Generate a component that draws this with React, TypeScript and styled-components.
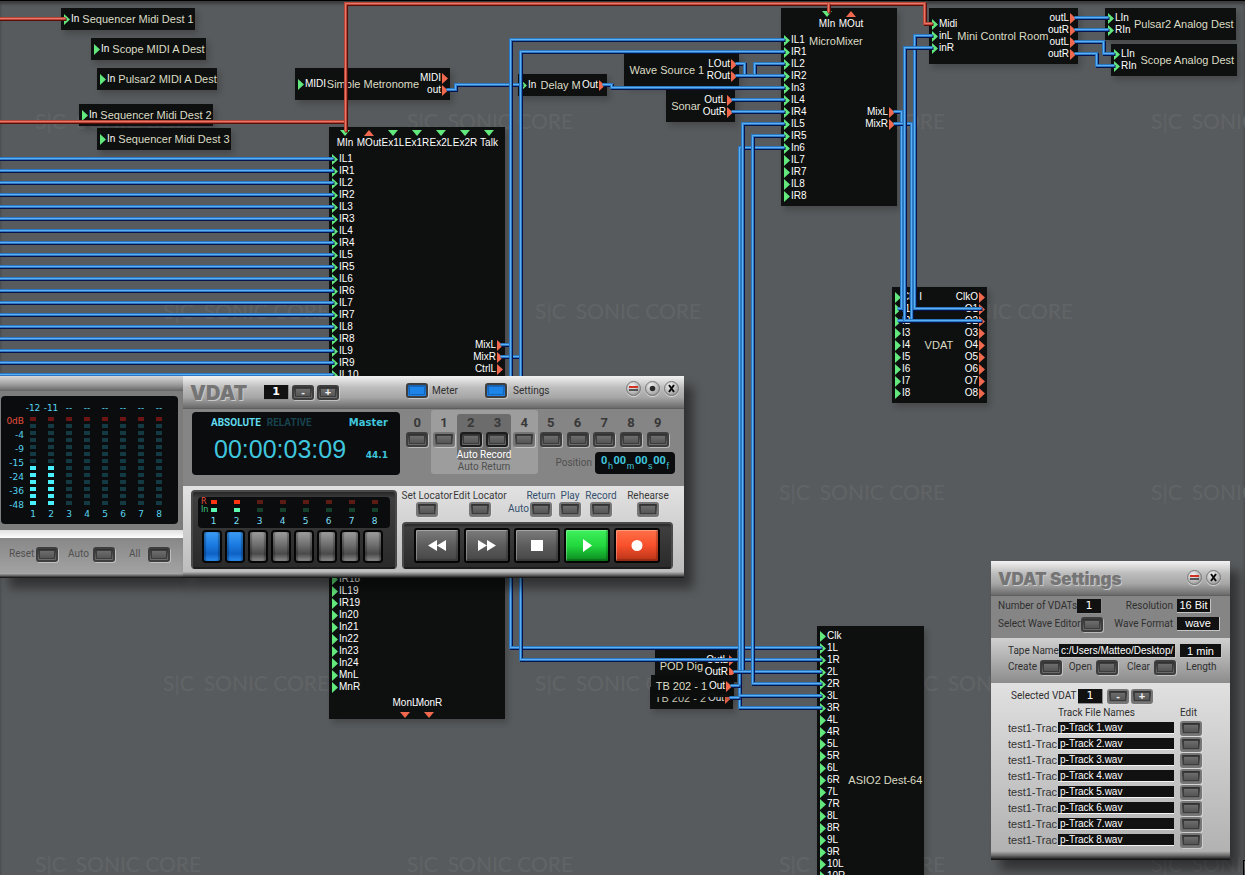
import React from "react";
import styled, { createGlobalStyle, css } from "styled-components";

const SANS = '"Liberation Sans", Arial, sans-serif';
const LABEL = 'Roboto, "Liberation Sans", sans-serif';
const PIXEL = '"DejaVu Sans", Verdana, sans-serif';
const CYAN = "#3fc6de";

const GlobalStyle = createGlobalStyle`
  * { box-sizing: border-box; }
  body { margin: 0; background: #585b5d; font-family: ${SANS}; }
  button, input, select, output { font: inherit; color: inherit; margin: 0; padding: 0; border: 0; }
`;

/* ---------- routing canvas ---------- */

const Canvas = styled.main`
  position: relative;
  height: 100vh;
  overflow: hidden;
  background: #585b5d;
  border-top: 1px solid #000;
  box-shadow: inset 0 3px 3px rgba(0, 0, 0, 0.35);
`;

const Surface = styled.div`
  position: absolute;
  inset: -1px 0 0 0;
`;

const Watermark = styled.span<{ $x: number; $y: number }>`
  position: absolute;
  left: ${(p) => p.$x}px;
  top: ${(p) => p.$y}px;
  display: flex;
  gap: 10px;
  font: 400 21px/24px Lato, ${SANS};
  color: #616466;
  white-space: nowrap;
`;

const NodeBox = styled.section<{ $x: number; $y: number; $w: number; $h: number }>`
  position: absolute;
  left: ${(p) => p.$x}px;
  top: ${(p) => p.$y}px;
  width: ${(p) => p.$w}px;
  height: ${(p) => p.$h}px;
  display: flex;
  flex-direction: column;
  background: rgba(11, 13, 13, 0.97);
  box-shadow: 3px 4px 6px rgba(0, 0, 0, 0.2);
  color: #fff;
  font-size: 10px;
  line-height: 12px;
  white-space: nowrap;
`;

const NodeBody = styled.div<{ $start?: boolean }>`
  flex: 1;
  display: flex;
  align-items: ${(p) => (p.$start ? "flex-start" : "center")};
  padding: 0 2px 0 3px;
`;

const NodeTitle = styled.h2<{ $clip?: boolean; $spaced?: boolean }>`
  flex: 1;
  min-width: 0;
  margin: 0;
  padding-left: ${(p) => (p.$spaced ? 3 : 0)}px;
  overflow: ${(p) => (p.$clip ? "hidden" : "visible")};
  font-size: 11px;
  font-weight: 400;
  line-height: 14px;
  text-align: center;
  color: #dcdcc4;
`;

const PortList = styled.ul<{ $right?: boolean; $top?: number }>`
  list-style: none;
  margin: ${(p) => p.$top ?? 0}px 0 0;
  padding: 0;
  display: flex;
  flex-direction: column;
  align-items: ${(p) => (p.$right ? "flex-end" : "flex-start")};
`;

const PortItem = styled.li`
  display: flex;
  align-items: center;
  gap: 1px;
  height: 12px;
`;

const EdgePorts = styled.ul<{ $bottom?: boolean }>`
  list-style: none;
  margin: 0;
  padding: ${(p) => (p.$bottom ? "4px 0 1px" : "3px 0 4px")};
  display: flex;
  justify-content: center;
`;

const EdgePort = styled.li<{ $bottom?: boolean }>`
  width: 24px;
  display: flex;
  flex-direction: ${(p) => (p.$bottom ? "column-reverse" : "column")};
  align-items: center;
  gap: ${(p) => (p.$bottom ? 3 : 1)}px;
`;

const GREEN = "#62e87c";
const RED = "#f0684e";

const SideArrow = ({ out }: { out?: boolean }) => (
  <svg width="6" height="11" viewBox="0 0 6 11" aria-hidden="true">
    <path d="M0 0L6 5.5L0 11Z" fill={out ? RED : GREEN} />
  </svg>
);

const EdgeArrow = ({ up, out }: { up?: boolean; out?: boolean }) => (
  <svg width="10" height="6" viewBox="0 0 10 6" aria-hidden="true">
    <path d={up ? "M0 6L5 0L10 6Z" : "M0 0L5 6L10 0Z"} fill={out ? RED : GREEN} />
  </svg>
);

type NodeSpec = {
  title?: string;
  x: number;
  y: number;
  w: number;
  h: number;
  ins?: string[];
  outs?: string[];
  top?: string[];
  bottom?: string[];
  outsTop?: number;
  clip?: boolean;
};

const pairs = (from: number, to: number, make: (n: number) => string[]) =>
  Array.from({ length: to - from + 1 }, (_, i) => make(from + i)).flat();

const NODES: NodeSpec[] = [
  { title: "Sequencer Midi Dest 1", x: 61, y: 8, w: 134, h: 22, ins: ["In"] },
  { title: "Scope MIDI A Dest", x: 91, y: 38, w: 115, h: 22, ins: ["In"] },
  { title: "Pulsar2 MIDI A Dest", x: 97, y: 68, w: 120, h: 22, ins: ["In"] },
  { title: "Sequencer Midi Dest 2", x: 79, y: 104, w: 134, h: 22, ins: ["In"] },
  { title: "Sequencer Midi Dest 3", x: 97, y: 128, w: 134, h: 22, ins: ["In"] },
  { title: "Simple Metronome", x: 295, y: 68, w: 155, h: 32, ins: ["MIDI"], outs: ["MIDI", "out"] },
  {
    x: 329, y: 127, w: 176, h: 592, outsTop: 186,
    top: ["MIn", "MOut", "Ex1L", "Ex1R", "Ex2L", "Ex2R", "Talk"],
    bottom: ["MonL", "MonR"],
    ins: [...pairs(1, 19, (n) => [`IL${n}`, `IR${n}`]), ...pairs(20, 24, (n) => [`In${n}`]), "MnL", "MnR"],
    outs: ["MixL", "MixR", "CtrlL"],
  },
  { title: "Delay M", x: 518, y: 74, w: 89, h: 22, ins: ["In"], outs: ["Out"], clip: true },
  { title: "Wave Source 1", x: 624, y: 54, w: 115, h: 32, outs: ["LOut", "ROut"] },
  { title: "Sonar", x: 666, y: 90, w: 69, h: 32, outs: ["OutL", "OutR"] },
  {
    title: "MicroMixer", x: 781, y: 8, w: 116, h: 198, outsTop: 72,
    top: ["MIn", "MOut"],
    ins: ["IL1", "IR1", "IL2", "IR2", "In3", "IL4", "IR4", "IL5", "IR5", "In6", "IL7", "IR7", "IL8", "IR8"],
    outs: ["MixL", "MixR"],
  },
  { title: "Mini Control Room", x: 929, y: 8, w: 149, h: 56, ins: ["Midi", "inL", "inR"], outs: ["outL", "outR", "outL", "outR"] },
  { title: "Pulsar2 Analog Dest", x: 1105, y: 8, w: 131, h: 32, ins: ["LIn", "RIn"] },
  { title: "Scope Analog Dest", x: 1111, y: 44, w: 126, h: 32, ins: ["LIn", "RIn"] },
  {
    title: "VDAT", x: 892, y: 287, w: 95, h: 116,
    ins: ["Clk I", ...pairs(1, 8, (n) => [`I${n}`])],
    outs: ["ClkO", ...pairs(1, 8, (n) => [`O${n}`])],
  },
  { title: "POD Dig", x: 655, y: 650, w: 82, h: 32, outs: ["OutL", "OutR"] },
  { title: "TB 202 - 2", x: 650, y: 687, w: 83, h: 22, outs: ["Out"] },
  { title: "TB 202 - 1", x: 651, y: 675, w: 83, h: 22, outs: ["Out"] },
  {
    title: "ASIO2 Dest-64", x: 817, y: 626, w: 107, h: 308,
    ins: ["Clk", ...pairs(1, 12, (n) => [`${n}L`, `${n}R`])],
  },
];

const PatchNode = ({ n }: { n: NodeSpec }) => (
  <NodeBox $x={n.x} $y={n.y} $w={n.w} $h={n.h}>
    {n.top && (
      <EdgePorts>
        {n.top.map((t) => (
          <EdgePort key={t}>
            <EdgeArrow up={t === "MOut"} out={t === "MOut"} />
            {t}
          </EdgePort>
        ))}
      </EdgePorts>
    )}
    <NodeBody $start={n.outsTop !== undefined}>
      {n.ins && (
        <PortList>
          {n.ins.map((t, i) => (
            <PortItem key={i}>
              <SideArrow />
              {t}
            </PortItem>
          ))}
        </PortList>
      )}
      <NodeTitle $clip={n.clip} $spaced={!!n.ins && (!n.outs || n.clip)}>{n.title}</NodeTitle>
      {n.outs && (
        <PortList $right $top={n.outsTop}>
          {n.outs.map((t, i) => (
            <PortItem key={i}>
              {t}
              <SideArrow out />
            </PortItem>
          ))}
        </PortList>
      )}
    </NodeBody>
    {n.bottom && (
      <EdgePorts $bottom>
        {n.bottom.map((t) => (
          <EdgePort key={t} $bottom>
            <EdgeArrow out />
            {t}
          </EdgePort>
        ))}
      </EdgePorts>
    )}
  </NodeBox>
);

const WireLayer = styled.svg`
  position: absolute;
  inset: 0;
  width: 100%;
  height: 100%;
  fill: none;
`;

const AUDIO_WIRES = [
  ...Array.from({ length: 19 }, (_, k) => `M-4 ${158 + 12 * k}H333`),
  "M446 89H455V84H522",
  "M602 84H611V87H784",
  "M500 344H510",
  "M500 356H520",
  "M784 39H510V647H821",
  "M784 51H520V659H821",
  "M735 63H744V75",
  "M784 63H754V75",
  "M735 75H784",
  "M731 99H784",
  "M731 111H784",
  "M784 147H739V707H821",
  "M729 697H739",
  "M730 685H739",
  "M739 695H821",
  "M784 123H742V671",
  "M733 671H821",
  "M784 135H752V683H821",
  "M893 111H901V308H897",
  "M893 123H911V320H897",
  "M981 308H914V35H932",
  "M981 320H904V47H932",
  "M1074 17H1108",
  "M1074 29H1108",
  "M1074 41H1103V53H1114",
  "M1074 53H1096V65H1114",
];

const MIDI_WIRES = ["M-4 18H65", "M-4 121H345", "M345 131V3H924V23H932", "M828 3V12"];

const Wire = ({ d, midi }: { d: string; midi?: boolean }) => (
  <g transform="translate(0.5 0.5)">
    <path d={d} transform="translate(1 1)" stroke={midi ? "#5a0d0a" : "#06134f"} strokeWidth="3" />
    <path d={d} stroke={midi ? "#b84436" : "#2a78c2"} strokeWidth="3" />
    <path d={d} stroke={midi ? "#e87868" : "#5eb0f4"} strokeWidth="1" />
  </g>
);

/* ---------- shared device parts ---------- */

const Device = styled.section<{ $x: number; $y: number; $w: number }>`
  position: absolute;
  left: ${(p) => p.$x}px;
  top: ${(p) => p.$y}px;
  width: ${(p) => p.$w}px;
  display: flex;
  flex-direction: column;
  background: #858585;
  box-shadow: 9px 10px 10px rgba(0, 0, 0, 0.45);
  font: 10px/14px ${LABEL};
  color: #303030;
  white-space: nowrap;
`;

const DeviceHeader = styled.header<{ $h: number; $end: number }>`
  height: ${(p) => p.$h}px;
  display: flex;
  align-items: center;
  padding: 0 ${(p) => p.$end}px 0 7px;
  background: linear-gradient(#f2f2f2 0, #bdbdbd 35%, #a6a6a6 65%, #6c6c6c 96%, #575757 100%);
`;

const DeviceTitle = styled.h1<{ $size: number }>`
  margin: 0;
  font: 900 ${(p) => p.$size}px/24px Inter, ${SANS};
  color: #757575;
  text-shadow: 1px 1px 0 #c9c9c9;
`;

const BottomEdge = styled.div<{ $h: number }>`
  height: ${(p) => p.$h}px;
  background: linear-gradient(#b4b4b4, #6a6a6a 50%, #141414 95%);
`;

const KeyButton = styled.button<{ $tone?: "dark" | "black" | "light"; $lit?: boolean }>`
  flex: none;
  display: flex;
  width: 22px;
  height: 15px;
  padding: 1px;
  border-radius: 3px;
  border: 2px solid ${(p) => (p.$tone === "black" ? "#1d1d1d" : p.$tone === "light" ? "#767676" : "#3e3e3e")};
  background: ${(p) => (p.$lit ? "linear-gradient(#1b5fae, #1e86ee)" : "linear-gradient(#2e2e2e, #6e6e6e)")};
  box-shadow: 1px 1px 0 rgba(225, 225, 225, 0.55);
  &::before {
    content: attr(data-sign);
    flex: 1;
    align-self: stretch;
    border: 1px solid ${(p) => (p.$lit ? "#1767b8" : "#3c3c3c")};
    background: ${(p) => (p.$lit ? "#1d84ea" : "linear-gradient(#6d6d6d, #555)")};
    font: 700 11px/7px ${SANS};
    text-align: center;
    color: #f0f0f0;
  }
`;

const Readout = styled.output<{ $w: number; $bold?: boolean }>`
  flex: none;
  width: ${(p) => p.$w}px;
  height: 15px;
  background: #111;
  border: solid #8d8d8d;
  border-width: 0 1px 1px 0;
  color: #fff;
  font: ${(p) => (p.$bold ? 700 : 400)} 11px/14px ${PIXEL};
  text-align: center;
`;

const Cap = styled.button`
  flex: none;
  width: 15px;
  height: 15px;
  display: grid;
  place-items: center;
  border-radius: 50%;
  border: 1px solid #777;
  background: radial-gradient(circle at 40% 30%, #f4f4f4, #b4b4b4 60%, #777);
  box-shadow: 0 1px 1px rgba(255, 255, 255, 0.6);
`;

const Caps = styled.div<{ $raised?: boolean }>`
  margin-left: auto;
  padding-bottom: ${(p) => (p.$raised ? 8 : 2)}px;
  display: flex;
  gap: 4px;
`;

const CapIcon = ({ kind }: { kind: "roll" | "dot" | "close" }) => (
  <svg width="11" height="11" viewBox="0 0 11 11" aria-hidden="true">
    {kind === "roll" && (
      <>
        <rect x="1" y="3" width="9" height="2" fill="#d23224" />
        <rect x="1" y="6" width="9" height="2" fill="#555" />
      </>
    )}
    {kind === "dot" && <circle cx="5.5" cy="5.5" r="2.8" fill="#2a2a2a" />}
    {kind === "close" && <path d="M3 2L8 9M8 2L3 9" stroke="#0a0a0a" strokeWidth="2" />}
  </svg>
);

/* ---------- level meter ---------- */

const MeterHead = styled.div`
  height: 15px;
  background: linear-gradient(#d8d8d8, #9a9a9a 60%, #646464);
`;

const MeterBody = styled.div`
  padding: 5px 5px 6px 1px;
  background: #7d7d7d;
`;

const Lcd = styled.div`
  background: #0b0c0d;
  border-radius: 4px;
  color: ${CYAN};
`;

const MeterLcd = styled(Lcd)`
  height: 128px;
  display: flex;
  padding: 6px 0 4px;
  font: 9px/12px ${PIXEL};
  color: #55d4f0;
`;

const Scale = styled.ul`
  list-style: none;
  margin: 0;
  padding: 12px 0 0;
  width: 23px;
  text-align: right;
  line-height: 14px;
  li:first-child { color: #e4503f; }
`;

const Channel = styled.div`
  width: 18px;
  display: flex;
  flex-direction: column;
  align-items: center;
`;

const Segments = styled.div`
  flex: 1;
  display: flex;
  flex-direction: column;
  gap: 3px;
  padding-top: 3px;
`;

const Segment = styled.i<{ $kind: "clip" | "on" | "off" }>`
  width: 6px;
  height: 4px;
  background: ${(p) => ({ clip: "#6b1414", on: "#48f0ff", off: "#133a42" })[p.$kind]};
`;

const MeterStrip = styled.div`
  height: 8px;
  background: linear-gradient(#e0e0e0, #fff);
`;

const MeterFooter = styled.div`
  height: 35px;
  display: grid;
  grid-template-columns: 59px 61px 1fr;
  align-items: center;
  padding: 0 0 3px 9px;
  background: linear-gradient(#888, #a2a2a2);
  color: #505050;
`;

const Pair = styled.label<{ $gap?: number; $w?: number }>`
  display: flex;
  align-items: center;
  gap: ${(p) => p.$gap ?? 4}px;
  padding-bottom: 4px;
  ${(p) => p.$w && css`width: ${p.$w}px;`}
`;

const FooterPair = styled(Pair)`
  padding-bottom: 0;
`;

const METER = [
  { peak: "-12", lit: 6 },
  { peak: "-11", lit: 6 },
  ...Array.from({ length: 6 }, () => ({ peak: "--", lit: 0 })),
];

const METER_KEYS = [
  { name: "Reset", gap: 2 },
  { name: "Auto", gap: 4 },
  { name: "All", gap: 8 },
];

const MeterPanel = () => (
  <Device $x={0} $y={376} $w={183} aria-label="Level meter">
    <MeterHead />
    <MeterBody>
      <MeterLcd>
        <Scale>
          {["0dB", "-4", "-9", "-15", "-24", "-36", "-48"].map((t) => <li key={t}>{t}</li>)}
        </Scale>
        {METER.map((c, i) => (
          <Channel key={i}>
            <span>{c.peak}</span>
            <Segments>
              {Array.from({ length: 13 }, (_, s) => (
                <Segment key={s} $kind={s === 0 ? "clip" : s >= 13 - c.lit ? "on" : "off"} />
              ))}
            </Segments>
            <span>{i + 1}</span>
          </Channel>
        ))}
      </MeterLcd>
    </MeterBody>
    <MeterStrip />
    <MeterFooter>
      {METER_KEYS.map((k) => (
        <FooterPair key={k.name} $gap={k.gap}>
          {k.name}
          <KeyButton />
        </FooterPair>
      ))}
    </MeterFooter>
    <BottomEdge $h={5} />
  </Device>
);

/* ---------- transport ---------- */

const HeaderTitleSlot = styled.div`
  width: 74px;
`;

const HeaderStepper = styled.div`
  display: flex;
  gap: 3px;
  margin-right: 67px;
`;

const Upper = styled.div`
  display: flex;
  gap: 4px;
  height: 77px;
  padding: 1px 8px 0 9px;
  background: #858585;
`;

const TimeLcd = styled(Lcd)`
  flex: none;
  width: 208px;
  height: 63px;
  margin-top: 2px;
  padding: 3px 12px 0 19px;
`;

const LcdRow = styled.div`
  display: flex;
  align-items: center;
  gap: 6px;
`;

const Mode = styled.span<{ $off?: boolean }>`
  font: 700 10px/16px ${LABEL};
  color: ${(p) => (p.$off ? "#17424e" : "#62dcf0")};
`;

const LcdNote = styled.span<{ $low?: boolean }>`
  margin-left: auto;
  padding-top: ${(p) => (p.$low ? 12 : 0)}px;
  font: 700 ${(p) => (p.$low ? 9 : 10)}px/14px ${PIXEL};
`;

const Time = styled.span`
  padding-left: 3px;
  font: 25px/36px ${SANS};
`;

const Locators = styled.div`
  flex: none;
  width: 267px;
  height: 64px;
  display: grid;
  grid-template-columns: repeat(10, 1fr);
  grid-template-rows: 38px 12px 14px;
  justify-items: center;
`;

const ReturnZone = styled.div`
  grid-area: 1 / 2 / 4 / 6;
  justify-self: stretch;
  border-radius: 3px;
  background: #9d9d9d;
`;

const RecordZone = styled.div`
  grid-area: 1 / 3 / 3 / 5;
  justify-self: stretch;
  margin-top: 4px;
  border-radius: 3px;
  background: #6c6c6c;
`;

const LocatorCell = styled.div<{ $col: number }>`
  grid-area: 1 / ${(p) => p.$col};
  display: flex;
  flex-direction: column;
  align-items: center;
  padding-top: 5px;
  gap: 1px;
  font: 700 13px/16px ${LABEL};
  color: #383838;
`;

const ZoneLabel = styled.span<{ $row: number; $bright?: boolean }>`
  grid-area: ${(p) => p.$row} / 3 / ${(p) => p.$row + 1} / 5;
  color: ${(p) => (p.$bright ? "#fff" : "#505050")};
`;

const Position = styled.div`
  grid-area: 2 / 6 / 4 / 11;
  justify-self: start;
  display: flex;
  align-items: center;
  gap: 3px;
  padding: 4px 0 0 18px;
  color: #505050;
`;

const PositionLcd = styled(Lcd)`
  width: 80px;
  height: 22px;
  padding: 2px 6px 0;
  display: flex;
  justify-content: space-between;
  font: 700 11px/14px ${LABEL};
`;

const Unit = styled.sub`
  padding-top: 6px;
  font: 9px/12px ${SANS};
`;

const Lower = styled.div`
  display: flex;
  gap: 5px;
  padding: 4px 11px 3px 8px;
  background: linear-gradient(#e2e2e2, #bcbcbc);
`;

const Bay = styled.div`
  background: linear-gradient(#262626, #3e3e3e 8%, #2a2a2a);
  border: 2px solid #4a4a4a;
  border-bottom-color: #1c1c1c;
  border-radius: 4px;
`;

const TrackBay = styled(Bay)`
  flex: none;
  width: 206px;
  height: 79px;
  padding: 5px 5px 0;
`;

const TrackLcd = styled(Lcd)`
  height: 31px;
  display: flex;
  padding-left: 3px;
  font: 9px/10px ${PIXEL};
  color: #7adcf4;
`;

const LampNames = styled.div`
  width: 9px;
  margin-right: -8px;
  padding-top: 1px;
  display: flex;
  flex-direction: column;
  line-height: 8px;
  font-size: 8px;
  color: #3fc88c;
  b { font-weight: 400; color: #e4503f; }
`;

const LampColumn = styled.div`
  flex: none;
  width: 23px;
  display: flex;
  flex-direction: column;
  align-items: center;
  gap: 4px;
  padding-top: 3px;
`;

const Lamp = styled.i<{ $color: string }>`
  width: 6px;
  height: 4px;
  background: ${(p) => p.$color};
`;

const TrackKeys = styled.div`
  display: flex;
  gap: 3px;
  margin: 2px 0 0 4px;
`;

const TrackKey = styled.button<{ $lit?: boolean }>`
  width: 20px;
  height: 33px;
  border: 2px solid #060606;
  border-radius: 4px;
  background: ${(p) =>
    p.$lit
      ? "linear-gradient(#3b9bf5, #1b7ae0 45%, #0f62c4 75%, #2a8cf0)"
      : "linear-gradient(#9c9c9c, #6e6e6e 45%, #4a4a4a 75%, #8a8a8a)"};
  box-shadow: inset 2px 0 1px rgba(0, 0, 0, 0.25), inset -2px 0 1px rgba(0, 0, 0, 0.25);
`;

const Controls = styled.div`
  flex: 1;
  min-width: 0;
  display: flex;
  flex-direction: column;
`;

const KeyRow = styled.div`
  display: flex;
  height: 32px;
`;

const KeyCell = styled.label<{ $w: number; $blue?: boolean }>`
  flex: none;
  width: ${(p) => p.$w}px;
  display: flex;
  flex-direction: column;
  align-items: center;
  line-height: 12px;
  color: ${(p) => (p.$blue ? "#34506e" : "#3a3a3a")};
`;

const SideLabel = styled.span`
  flex: none;
  width: 18px;
  padding-top: 12px;
  color: #34506e;
`;

const TransportBay = styled(Bay)`
  height: 47px;
  display: flex;
  justify-content: center;
  gap: 4px;
  padding: 4px 2px 0 0;
`;

const TransportKey = styled.button<{ $tone?: "play" | "rec" }>`
  width: 46px;
  height: 35px;
  display: grid;
  place-items: center;
  border: 2px solid #050505;
  border-radius: 3px;
  background: ${(p) =>
    p.$tone === "play"
      ? "linear-gradient(#3ff05c, #22d83e 50%, #0c8a20)"
      : p.$tone === "rec"
        ? "linear-gradient(#ff7048, #f8502c 50%, #b83418)"
        : "linear-gradient(#7c7c7c, #5c5c5c 50%, #464646)"};
  box-shadow: inset 1px 1px 0 rgba(255, 255, 255, 0.3), inset -2px -2px 1px rgba(0, 0, 0, 0.2);
`;

const TRANSPORT: { name: string; tone?: "play" | "rec"; icon: React.ReactNode }[] = [
  { name: "Rewind", icon: <path d="M10 5V16L1 10.5ZM19 5V16L10 10.5Z" /> },
  { name: "Fast forward", icon: <path d="M1 5V16L10 10.5ZM10 5V16L19 10.5Z" /> },
  { name: "Stop", icon: <rect x="4" y="5" width="12" height="11" /> },
  { name: "Play", tone: "play", icon: <path d="M6 4V17L15 10.5Z" /> },
  { name: "Record", tone: "rec", icon: <circle cx="10" cy="10.5" r="5.5" /> },
];

const locatorTone = (n: number) => (n === 2 || n === 3 ? "black" : n === 1 || n === 4 ? "light" : "dark");

const VdatPanel = () => (
  <Device $x={183} $y={376} $w={501} aria-label="VDAT">
    <DeviceHeader $h={33} $end={5}>
      <HeaderTitleSlot><DeviceTitle $size={20}>VDAT</DeviceTitle></HeaderTitleSlot>
      <HeaderStepper>
        <Readout $w={25} $bold>1</Readout>
        <KeyButton data-sign="-" aria-label="Previous VDAT" />
        <KeyButton data-sign="+" aria-label="Next VDAT" />
      </HeaderStepper>
      <Pair $w={79}><KeyButton $lit />Meter</Pair>
      <Pair $gap={6}><KeyButton $lit />Settings</Pair>
      <Caps $raised>
        <Cap aria-label="Roll up"><CapIcon kind="roll" /></Cap>
        <Cap aria-label="Pin"><CapIcon kind="dot" /></Cap>
        <Cap aria-label="Close"><CapIcon kind="close" /></Cap>
      </Caps>
    </DeviceHeader>

    <Upper>
      <TimeLcd>
        <LcdRow>
          <Mode>ABSOLUTE</Mode>
          <Mode $off>RELATIVE</Mode>
          <LcdNote>Master</LcdNote>
        </LcdRow>
        <LcdRow>
          <Time>00:00:03:09</Time>
          <LcdNote $low>44.1</LcdNote>
        </LcdRow>
      </TimeLcd>
      <Locators>
        <ReturnZone />
        <RecordZone />
        {Array.from({ length: 10 }, (_, n) => (
          <LocatorCell key={n} $col={n + 1}>
            {n}
            <KeyButton $tone={locatorTone(n)} aria-label={`Locator ${n}`} />
          </LocatorCell>
        ))}
        <ZoneLabel $row={2} $bright>Auto Record</ZoneLabel>
        <ZoneLabel $row={3}>Auto Return</ZoneLabel>
        <Position>
          Position
          <PositionLcd>
            <span>0</span><Unit>h</Unit><span>00</span><Unit>m</Unit><span>00</span><Unit>s</Unit><span>00</span><Unit>f</Unit>
          </PositionLcd>
        </Position>
      </Locators>
    </Upper>

    <Lower>
      <TrackBay>
        <TrackLcd>
          <LampNames><b>R</b>In</LampNames>
          {Array.from({ length: 8 }, (_, i) => (
            <LampColumn key={i}>
              <Lamp $color={i < 2 ? "#ff3410" : "#5c1c14"} />
              <Lamp $color={i < 2 ? "#5cf8b0" : "#16402c"} />
              {i + 1}
            </LampColumn>
          ))}
        </TrackLcd>
        <TrackKeys>
          {Array.from({ length: 8 }, (_, i) => (
            <TrackKey key={i} $lit={i < 2} aria-label={`Arm track ${i + 1}`} />
          ))}
        </TrackKeys>
      </TrackBay>
      <Controls>
        <KeyRow>
          <KeyCell $w={50}>Set Locator<KeyButton $tone="light" /></KeyCell>
          <KeyCell $w={56}>Edit Locator<KeyButton $tone="light" /></KeyCell>
          <SideLabel>Auto</SideLabel>
          <KeyCell $w={30} $blue>Return<KeyButton $tone="light" /></KeyCell>
          <KeyCell $w={28} $blue>Play<KeyButton $tone="light" /></KeyCell>
          <KeyCell $w={34} $blue>Record<KeyButton $tone="light" /></KeyCell>
          <KeyCell $w={60}>Rehearse<KeyButton $tone="light" /></KeyCell>
        </KeyRow>
        <TransportBay>
          {TRANSPORT.map((t) => (
            <TransportKey key={t.name} $tone={t.tone} aria-label={t.name}>
              <svg width="20" height="21" viewBox="0 0 20 21" fill="#fff" aria-hidden="true">{t.icon}</svg>
            </TransportKey>
          ))}
        </TransportBay>
      </Controls>
    </Lower>
    <BottomEdge $h={6} />
  </Device>
);

/* ---------- settings ---------- */

const SettingsBody = styled.div<{ $bg: string; $top: number; $bottom: number; $gap: number }>`
  display: flex;
  flex-direction: column;
  gap: ${(p) => p.$gap}px;
  padding: ${(p) => p.$top}px 0 ${(p) => p.$bottom}px;
  background: ${(p) => p.$bg};
`;

const FieldRow = styled.div<{ $indent: number }>`
  display: flex;
  align-items: center;
  height: 16px;
  padding: 0 8px 0 ${(p) => p.$indent}px;
`;

const FieldName = styled.label<{ $w: number; $right?: boolean }>`
  flex: none;
  width: ${(p) => p.$w}px;
  padding-right: ${(p) => (p.$right ? 4 : 0)}px;
  text-align: ${(p) => (p.$right ? "right" : "left")};
`;

const Spacer = styled.span<{ $w: number }>`
  flex: none;
  width: ${(p) => p.$w}px;
`;

const fieldLook = css<{ $w: number }>`
  flex: none;
  width: ${(p) => p.$w}px;
  height: 14px;
  appearance: none;
  border-radius: 0;
  background: #111;
  border: solid #c4c4c4;
  border-width: 0 1px 1px 0;
  color: #fff;
`;

const Choice = styled.select<{ $w: number }>`
  ${fieldLook}
  font: 11px/13px ${SANS};
  text-align: center;
  text-align-last: center;
`;

const TextField = styled.input<{ $w: number; $center?: boolean }>`
  ${fieldLook}
  padding-left: ${(p) => (p.$center ? 0 : 2)}px;
  font: ${(p) => (p.$center ? 11 : 10)}px/12px ${SANS};
  text-align: ${(p) => (p.$center ? "center" : "left")};
`;

const TrackTable = styled.table`
  margin-left: 17px;
  width: 200px;
  table-layout: fixed;
  border-collapse: collapse;
  thead td, th { padding: 0; height: 14px; line-height: 14px; font-weight: 400; text-align: left; }
  tbody td { padding: 0; height: 16px; vertical-align: middle; }
`;

const PrefixCol = styled.col`
  width: 50px;
`;

const FileCol = styled.col`
  width: 122px;
`;

const TapePrefix = styled.td`
  font: 11px/14px ${SANS};
  color: #333;
`;

const TrackName = styled.input`
  display: block;
  width: 116px;
  height: 12px;
  background: #111;
  border-bottom: 1px solid #f4f4f4;
  padding-left: 2px;
  font: 10px/11px ${SANS};
  color: #fff;
`;

const SettingsPanel = () => (
  <Device $x={991} $y={561} $w={239} aria-label="VDAT Settings">
    <DeviceHeader $h={35} $end={9}>
      <DeviceTitle $size={17}>VDAT Settings</DeviceTitle>
      <Caps>
        <Cap aria-label="Roll up"><CapIcon kind="roll" /></Cap>
        <Cap aria-label="Close"><CapIcon kind="close" /></Cap>
      </Caps>
    </DeviceHeader>

    <SettingsBody $bg="#858585" $top={2} $gap={2} $bottom={6}>
      <FieldRow $indent={7}>
        <FieldName $w={79}>Number of VDATs</FieldName>
        <Readout $w={25}>1</Readout>
        <FieldName $w={75} $right htmlFor="resolution">Resolution</FieldName>
        <Choice $w={34} id="resolution"><option>16 Bit</option></Choice>
      </FieldRow>
      <FieldRow $indent={7}>
        <FieldName $w={83} htmlFor="wave-editor">Select Wave Editor</FieldName>
        <KeyButton id="wave-editor" />
        <FieldName $w={74} $right htmlFor="wave-format">Wave Format</FieldName>
        <Choice $w={43} id="wave-format"><option>wave</option></Choice>
      </FieldRow>
    </SettingsBody>

    <SettingsBody $bg="linear-gradient(#d0d0d0, #8c8c8c)" $top={5} $gap={0} $bottom={8}>
      <FieldRow $indent={17}>
        <FieldName $w={51} htmlFor="tape">Tape Name</FieldName>
        <TextField $w={117} id="tape" defaultValue="c:/Users/Matteo/Desktop/" />
        <Spacer $w={4} />
        <TextField $w={42} id="length" defaultValue="1 min" $center />
      </FieldRow>
      <FieldRow $indent={17}>
        <FieldName $w={32} htmlFor="create">Create</FieldName>
        <KeyButton id="create" />
        <FieldName $w={34} $right htmlFor="open">Open</FieldName>
        <KeyButton id="open" />
        <FieldName $w={36} $right htmlFor="clear">Clear</FieldName>
        <KeyButton id="clear" />
        <Spacer $w={10} />
        <FieldName $w={38} htmlFor="length">Length</FieldName>
      </FieldRow>
    </SettingsBody>

    <SettingsBody $bg="linear-gradient(#e0e0e0, #b2b2b2)" $top={5} $gap={2} $bottom={3}>
      <FieldRow $indent={20}>
        <FieldName $w={67}>Selected VDAT</FieldName>
        <Readout $w={25}>1</Readout>
        <Spacer $w={4} />
        <KeyButton $tone="light" data-sign="-" aria-label="Previous VDAT" />
        <Spacer $w={2} />
        <KeyButton $tone="light" data-sign="+" aria-label="Next VDAT" />
      </FieldRow>
      <TrackTable>
        <colgroup>
          <PrefixCol />
          <FileCol />
          <col />
        </colgroup>
        <thead>
          <tr><td /><th>Track File Names</th><th>Edit</th></tr>
        </thead>
        <tbody>
          {Array.from({ length: 8 }, (_, i) => (
            <tr key={i}>
              <TapePrefix>test1-Trac</TapePrefix>
              <td><TrackName aria-label={`Track ${i + 1} file`} defaultValue={`p-Track ${i + 1}.wav`} /></td>
              <td><KeyButton $tone="light" aria-label={`Edit track ${i + 1}`} /></td>
            </tr>
          ))}
        </tbody>
      </TrackTable>
    </SettingsBody>
    <BottomEdge $h={9} />
  </Device>
);

const CornerMark = styled.div`
  position: absolute;
  right: 0;
  bottom: 0;
  width: 2px;
  height: 15px;
  border: solid #000;
  border-width: 1px 0 0 1px;
`;

const WATERMARKS = [109, 299, 480, 671, 852].flatMap((y, row) =>
  (row % 2 ? [163, 535, 907] : [35, 407, 779, 1151]).map((x) => ({ x, y }))
);

export default function App() {
  return (
    <Canvas>
      <GlobalStyle />
      <Surface>
        {WATERMARKS.map((m) => (
          <Watermark key={`${m.x}-${m.y}`} $x={m.x} $y={m.y} aria-hidden="true">
            <span>S|C</span>
            <span>SONIC CORE</span>
          </Watermark>
        ))}
        {NODES.map((n, i) => <PatchNode key={i} n={n} />)}
        <WireLayer aria-hidden="true">
          {AUDIO_WIRES.map((d) => <Wire key={d} d={d} />)}
          {MIDI_WIRES.map((d) => <Wire key={d} d={d} midi />)}
        </WireLayer>
        <MeterPanel />
        <VdatPanel />
        <SettingsPanel />
        <CornerMark />
      </Surface>
    </Canvas>
  );
}
